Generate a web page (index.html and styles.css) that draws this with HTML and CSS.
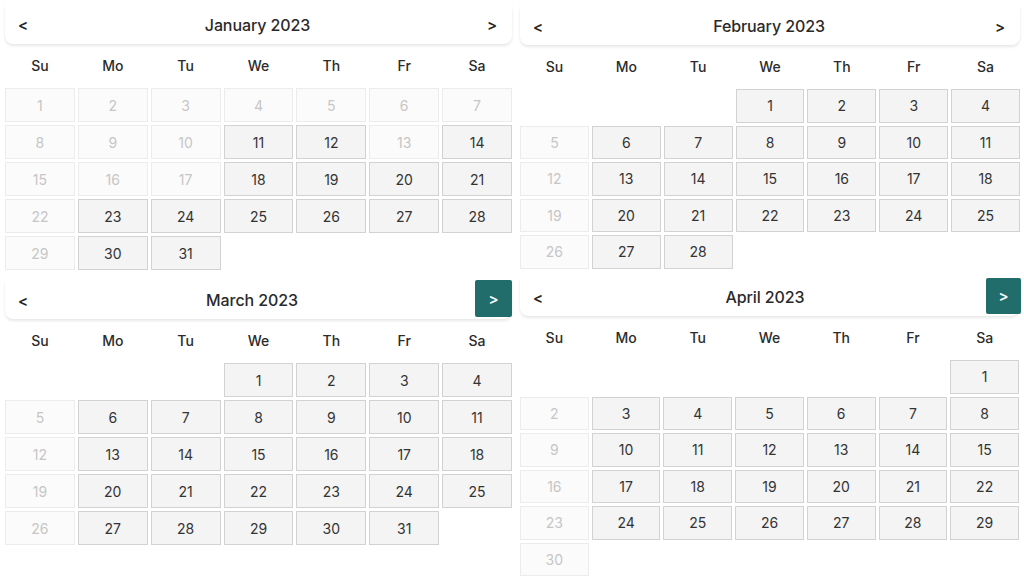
FILE: index.html
```html
<!DOCTYPE html>
<html>
<head>
<meta charset="utf-8">
<link rel="stylesheet" href="styles.css">
</head>
<body>
<div class="page">
  <section class="cal cal-jan">
    <div class="head"><span class="nav">&lt;</span><span class="title">January 2023</span><span class="nav">&gt;</span></div>
    <div class="wk"><span>Su</span><span>Mo</span><span>Tu</span><span>We</span><span>Th</span><span>Fr</span><span>Sa</span></div>
    <div class="days">
      <span class="d off">1</span><span class="d off">2</span><span class="d off">3</span><span class="d off">4</span><span class="d off">5</span><span class="d off">6</span><span class="d off">7</span>
      <span class="d off">8</span><span class="d off">9</span><span class="d off">10</span><span class="d">11</span><span class="d">12</span><span class="d off">13</span><span class="d">14</span>
      <span class="d off">15</span><span class="d off">16</span><span class="d off">17</span><span class="d">18</span><span class="d">19</span><span class="d">20</span><span class="d">21</span>
      <span class="d off">22</span><span class="d">23</span><span class="d">24</span><span class="d">25</span><span class="d">26</span><span class="d">27</span><span class="d">28</span>
      <span class="d off">29</span><span class="d">30</span><span class="d">31</span>
    </div>
  </section>
  <section class="cal cal-feb">
    <div class="head"><span class="nav">&lt;</span><span class="title">February 2023</span><span class="nav">&gt;</span></div>
    <div class="wk"><span>Su</span><span>Mo</span><span>Tu</span><span>We</span><span>Th</span><span>Fr</span><span>Sa</span></div>
    <div class="days">
      <span class="e"></span><span class="e"></span><span class="e"></span><span class="d">1</span><span class="d">2</span><span class="d">3</span><span class="d">4</span>
      <span class="d off">5</span><span class="d">6</span><span class="d">7</span><span class="d">8</span><span class="d">9</span><span class="d">10</span><span class="d">11</span>
      <span class="d off">12</span><span class="d">13</span><span class="d">14</span><span class="d">15</span><span class="d">16</span><span class="d">17</span><span class="d">18</span>
      <span class="d off">19</span><span class="d">20</span><span class="d">21</span><span class="d">22</span><span class="d">23</span><span class="d">24</span><span class="d">25</span>
      <span class="d off">26</span><span class="d">27</span><span class="d">28</span>
    </div>
  </section>
  <section class="cal cal-mar">
    <div class="head"><span class="nav">&lt;</span><span class="title">March 2023</span><span class="nav btn">&gt;</span></div>
    <div class="wk"><span>Su</span><span>Mo</span><span>Tu</span><span>We</span><span>Th</span><span>Fr</span><span>Sa</span></div>
    <div class="days">
      <span class="e"></span><span class="e"></span><span class="e"></span><span class="d">1</span><span class="d">2</span><span class="d">3</span><span class="d">4</span>
      <span class="d off">5</span><span class="d">6</span><span class="d">7</span><span class="d">8</span><span class="d">9</span><span class="d">10</span><span class="d">11</span>
      <span class="d off">12</span><span class="d">13</span><span class="d">14</span><span class="d">15</span><span class="d">16</span><span class="d">17</span><span class="d">18</span>
      <span class="d off">19</span><span class="d">20</span><span class="d">21</span><span class="d">22</span><span class="d">23</span><span class="d">24</span><span class="d">25</span>
      <span class="d off">26</span><span class="d">27</span><span class="d">28</span><span class="d">29</span><span class="d">30</span><span class="d">31</span>
    </div>
  </section>
  <section class="cal cal-apr">
    <div class="head"><span class="nav">&lt;</span><span class="title">April 2023</span><span class="nav btn">&gt;</span></div>
    <div class="wk"><span>Su</span><span>Mo</span><span>Tu</span><span>We</span><span>Th</span><span>Fr</span><span>Sa</span></div>
    <div class="days">
      <span class="e"></span><span class="e"></span><span class="e"></span><span class="e"></span><span class="e"></span><span class="e"></span><span class="d">1</span>
      <span class="d off">2</span><span class="d">3</span><span class="d">4</span><span class="d">5</span><span class="d">6</span><span class="d">7</span><span class="d">8</span>
      <span class="d off">9</span><span class="d">10</span><span class="d">11</span><span class="d">12</span><span class="d">13</span><span class="d">14</span><span class="d">15</span>
      <span class="d off">16</span><span class="d">17</span><span class="d">18</span><span class="d">19</span><span class="d">20</span><span class="d">21</span><span class="d">22</span>
      <span class="d off">23</span><span class="d">24</span><span class="d">25</span><span class="d">26</span><span class="d">27</span><span class="d">28</span><span class="d">29</span>
      <span class="d off">30</span>
    </div>
  </section>
</div>
</body>
</html>
```

FILE: styles.css
```css
html, body {
  margin: 0;
  padding: 0;
  background: #ffffff;
}
body {
  font-family: Inter, "Noto Sans", "Liberation Sans", sans-serif;
  color: #333333;
  width: 1024px;
  height: 578px;
  overflow: hidden;
}
.page {
  display: grid;
  grid-template-columns: 507px 500px;
  grid-template-rows: 276px auto;
  column-gap: 8px;
  padding-left: 5px;
  align-items: start;
}
.cal-jan { margin-top: 5px; }
.cal-feb { margin-top: 7px; }
.cal-mar { margin-top: 5px; }
.cal-apr { margin-top: 2px; width: 499px; }

.head {
  height: 39px;
  display: flex;
  align-items: center;
  justify-content: space-between;
  background: #ffffff;
  border-radius: 0 0 8px 8px;
  box-shadow: 0 2px 3px rgba(0, 0, 0, 0.09), 0 0 1px rgba(0, 0, 0, 0.06);
  padding: 0 14px 0 12px;
  position: relative;
}
.cal-feb .head, .cal-mar .head, .cal-apr .head { height: 38px; }
.title {
  font-size: 16px;
  font-weight: 500;
  color: #2a2a2a;
  letter-spacing: -0.1px;
}
.nav {
  font-size: 15px;
  font-weight: 600;
  color: #222222;
  width: 12px;
  text-align: center;
}
.btn {
  width: 37px;
  height: 37px;
  margin-right: -14px;
  margin-top: -4px;
  background: #206d6c;
  color: #ffffff;
  border-radius: 2px;
  display: flex;
  align-items: center;
  justify-content: center;
}
.cal-apr .btn {
  width: 35px;
  height: 36px;
  margin-right: -16px;
  margin-top: -3px;
}

.wk {
  height: 42px;
  display: grid;
  grid-template-columns: repeat(7, 1fr);
  column-gap: 3px;
  align-items: center;
  text-align: center;
  font-size: 14px;
  font-weight: 500;
  color: #2b2b2b;
}
.days {
  margin-top: 2px;
  display: grid;
  grid-template-columns: repeat(7, 1fr);
  grid-auto-rows: 34px;
  gap: 3px;
}
.cal-feb .days, .cal-apr .days {
  grid-auto-rows: 33.5px;
}
.d {
  display: flex;
  align-items: center;
  justify-content: center;
  background: #f4f4f4;
  border: 1px solid #d2d2d2;
  font-size: 14px;
  color: #333333;
}
.d.off {
  background: #fbfbfb;
  border-color: #ececec;
  color: #c6c6c6;
}
.e {
  display: block;
}
```
